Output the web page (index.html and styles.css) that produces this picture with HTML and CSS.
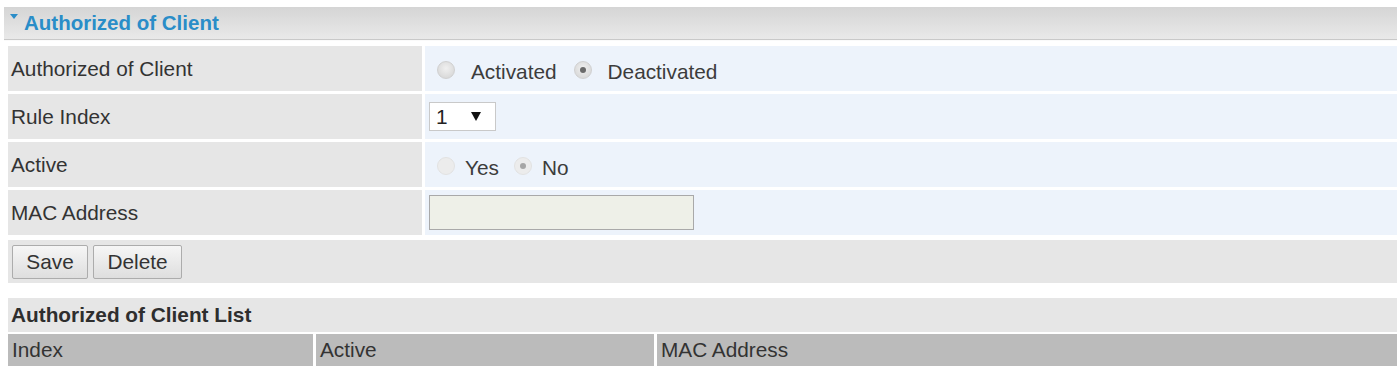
FILE: index.html
```
<!DOCTYPE html>
<html lang="en">
<head>
    <meta charset="UTF-8">
    <title>Authorized of Client</title>
    <link rel="stylesheet" href="styles.css">
</head>
<body>
    <div class="page">
        <div class="title-bar">
            <span class="caret"></span>
            <span class="title">Authorized of Client</span>
        </div>

        <div class="form-grid">
            <div class="label">Authorized of Client</div>
            <div class="value">
                <label class="opt"><span class="radio"></span>Activated</label>
                <label class="opt"><span class="radio checked"></span>Deactivated</label>
            </div>

            <div class="label">Rule Index</div>
            <div class="value">
                <div class="select"><span>1</span><span class="arrow"></span></div>
            </div>

            <div class="label">Active</div>
            <div class="value">
                <label class="opt tight"><span class="radio off"></span>Yes</label>
                <label class="opt tight"><span class="radio off checked"></span>No</label>
            </div>

            <div class="label">MAC Address</div>
            <div class="value">
                <div class="text-input"></div>
            </div>
        </div>

        <div class="button-bar">
            <button class="btn save">Save</button>
            <button class="btn delete">Delete</button>
        </div>

        <div class="list-title">Authorized of Client List</div>
        <div class="list-head">
            <div class="col col-index">Index</div>
            <div class="col col-active">Active</div>
            <div class="col col-mac">MAC Address</div>
        </div>
    </div>
</body>
</html>
```
FILE: styles.css
```
* {
    margin: 0;
    padding: 0;
    box-sizing: border-box;
}

body {
    background: #fff;
    font-family: 'Liberation Sans', Arial, sans-serif;
    font-size: 20.8px;
    color: #363636;
    overflow: hidden;
}

.page {
    width: 1400px;
    padding: 7px 3px 0 4px;
}

/* Section title */
.title-bar {
    height: 33px;
    display: flex;
    align-items: center;
    padding-left: 6px;
    background: linear-gradient(#d5d5d5, #e9e9e9);
    border-bottom: 1px solid #c9c9c9;
    box-shadow: 0 1px 0 #fafafa;
}

.caret {
    width: 0;
    height: 0;
    border-left: 4px solid transparent;
    border-right: 4px solid transparent;
    border-top: 5px solid #2a8dc8;
    margin-right: 6px;
    align-self: flex-start;
    margin-top: 7px;
}

.title {
    color: #2a8dc8;
    font-weight: bold;
    font-size: 20.5px;
}

/* Form rows */
.form-grid {
    display: grid;
    grid-template-columns: 414px 1fr;
    grid-auto-rows: 45px;
    gap: 3px;
    margin-top: 6px;
    padding-left: 4px;
}

.label {
    background: #e6e6e6;
    display: flex;
    align-items: center;
    padding-left: 3px;
    color: #333;
}

.value {
    background: #edf3fb;
    display: flex;
    align-items: center;
    padding-left: 12px;
    padding-top: 6px;
    color: #3c3c3c;
}

.opt {
    display: flex;
    align-items: center;
    margin-right: 17px;
}

.opt.tight {
    margin-right: 15px;
}

.radio {
    width: 18px;
    height: 18px;
    border-radius: 50%;
    background: radial-gradient(circle at 50% 40%, #f0f0f0, #d2d2d2);
    border: 1px solid #d0d0d0;
    margin-right: 16px;
    position: relative;
    top: -2px;
}

.radio.checked::after {
    content: "";
    position: absolute;
    left: 5px;
    top: 5px;
    width: 6px;
    height: 6px;
    border-radius: 50%;
    background: #6a6a6a;
}

.radio.off {
    background: #ececec;
    border-color: #e2e2e2;
    margin-right: 10px;
}

.radio.off.checked::after {
    background: #a6a6a6;
}

.select {
    width: 67px;
    height: 29px;
    background: #fff;
    border: 1px solid #c9c9c9;
    display: flex;
    align-items: center;
    padding-left: 6px;
    margin-left: -8px;
    margin-top: -6px;
    color: #222;
}

.select .arrow {
    width: 0;
    height: 0;
    border-left: 5px solid transparent;
    border-right: 5px solid transparent;
    border-top: 9px solid #111;
    margin-left: 23px;
}

.text-input {
    width: 265px;
    height: 35px;
    background: #eef0e8;
    border: 1px solid #a9a9a9;
    margin-left: -8px;
    margin-top: -6px;
}

/* Buttons */
.button-bar {
    height: 43px;
    margin: 5px 0 0 4px;
    background: #e6e6e6;
    display: flex;
    align-items: center;
    gap: 5px;
    padding-left: 4px;
}

.btn {
    height: 34px;
    font-family: inherit;
    font-size: 20.8px;
    color: #333;
    background: linear-gradient(#f6f6f6, #dedede);
    border: 1px solid #acacac;
    border-radius: 2px;
}

.save {
    width: 76px;
}

.delete {
    width: 89px;
}

/* Client list */
.list-title {
    height: 34px;
    margin: 15px 0 0 4px;
    background: #e6e6e6;
    font-weight: bold;
    color: #2e2e2e;
    display: flex;
    align-items: center;
    padding-left: 3px;
}

.list-head {
    display: flex;
    gap: 3px;
    margin: 2px 0 0 4px;
    height: 32px;
}

.col {
    background: #bbbbbb;
    display: flex;
    align-items: center;
    padding-left: 4px;
    color: #333;
}

.col-index {
    width: 305px;
}

.col-active {
    width: 338px;
}

.col-mac {
    flex: 1;
}
```
